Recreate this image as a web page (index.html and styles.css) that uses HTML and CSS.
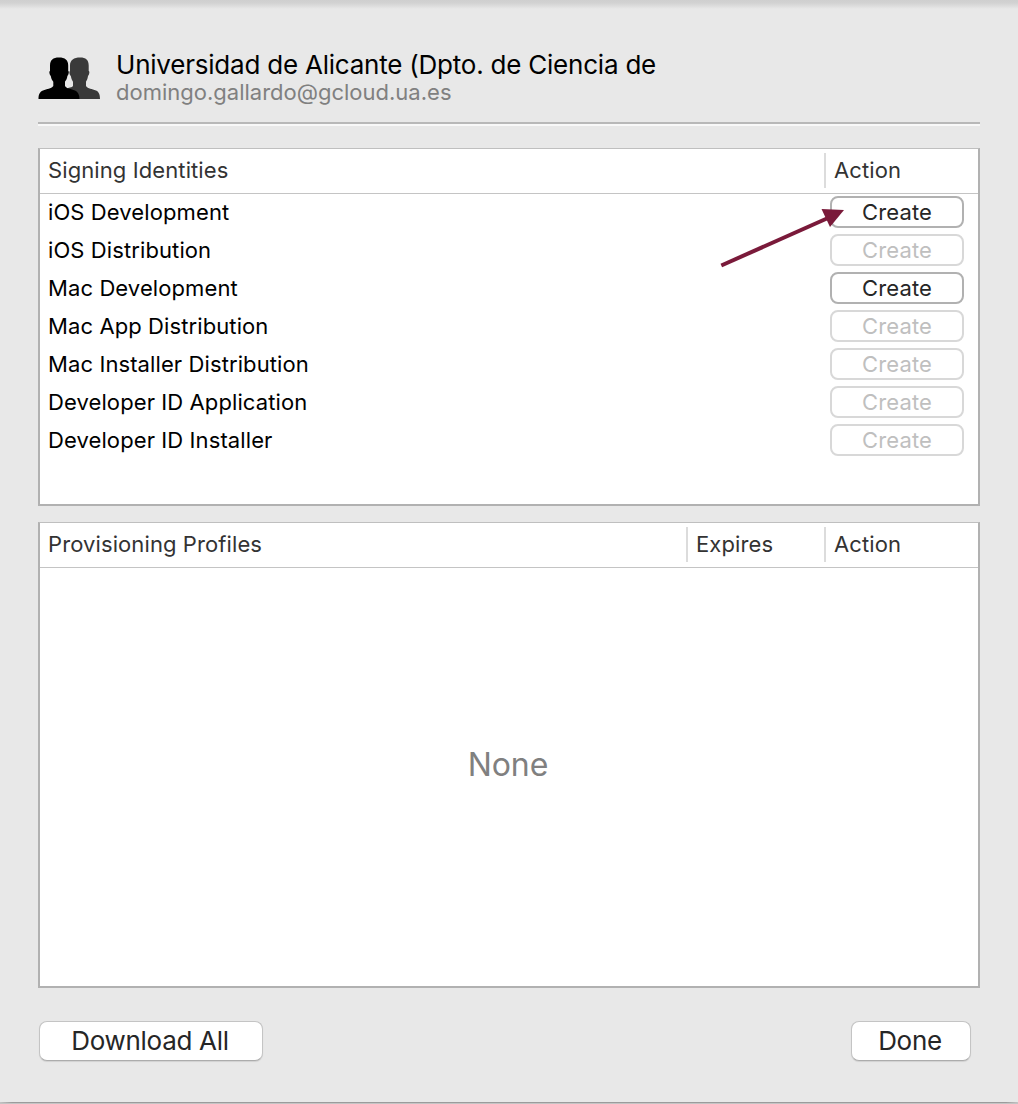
FILE: index.html
```html
<!DOCTYPE html>
<html lang="en">
<head>
<meta charset="utf-8">
<title>Signing Identities</title>
<link rel="stylesheet" href="styles.css">
</head>
<body>
<main class="sheet">
  <header class="account">
    <svg class="team-icon" width="64" height="46" viewBox="0 0 64 46" aria-hidden="true">
      <path class="person-back" d="M42 .5c6 0 8.700 2.500 8.700 8v5.500c1 0 1 3-.7 5-.5 4-2 5-2 6v4c2 3 6 2.800 10 4.500 3 1.500 4 4 4 8.500H30V31c3-.5 4-1 5-2v-4c0-1-1.500-2-2.200-6-1.800-2-1.500-5-.8-5V8.500c0-5.500 4-8 10-8z"/>
      <path class="person-front" d="M21 .5c6 0 9.200 2.500 9.200 8v5.500c1 0 .8 3-.8 5-.5 4-2.400 5-2.400 6v4c2 3 6 2.800 10 4.500 3 1.500 4.500 4 4.500 8.500H.5c0-4.500 1-7 4.500-8.500 4-1.700 8-1.500 10.300-4.500v-4c0-1-2-2-2.500-6-1.600-2-1.800-5-.8-5V8.500c0-5.500 3-8 9-8z"/>
    </svg>
    <div class="account-text">
      <h1 class="account-name"><span>Universidad de Alicante (Dpto. de Ciencia de</span></h1>
      <p class="account-mail"><span>domingo.gallardo@gcloud.ua.es</span></p>
    </div>
  </header>

  <section class="panel identities">
    <div class="panel-head">
      <div class="col-name"><span>Signing Identities</span></div>
      <div class="col-action">Action</div>
    </div>
    <ul class="rows">
      <li class="row"><span>iOS Development</span><button class="create">Create</button></li>
      <li class="row"><span>iOS Distribution</span><button class="create" disabled>Create</button></li>
      <li class="row"><span>Mac Development</span><button class="create">Create</button></li>
      <li class="row"><span>Mac App Distribution</span><button class="create" disabled>Create</button></li>
      <li class="row"><span>Mac Installer Distribution</span><button class="create" disabled>Create</button></li>
      <li class="row"><span>Developer ID Application</span><button class="create" disabled>Create</button></li>
      <li class="row"><span>Developer ID Installer</span><button class="create" disabled>Create</button></li>
    </ul>
    <svg class="arrow" width="126" height="64" viewBox="0 0 126 64" aria-hidden="true">
      <path class="arrow-line" d="M1.300 60.500L108 13"/>
      <path class="arrow-head" d="M101.500 4L124 5 110 22z"/>
    </svg>
  </section>

  <section class="panel profiles">
    <div class="panel-head">
      <div class="col-name"><span>Provisioning Profiles</span></div>
      <div class="col-expires">Expires</div>
      <div class="col-action">Action</div>
    </div>
    <div class="empty"><span>None</span></div>
  </section>

  <footer class="actions">
    <button class="push download">Download All</button>
    <button class="push done">Done</button>
  </footer>
</main>
</body>
</html>
```
FILE: styles.css
```css
* { box-sizing: border-box; }

body {
  margin: 0;
  font-family: Inter, "Liberation Sans", sans-serif;
  font-size: 22px;
  letter-spacing: 0.1px;
  color: #000;
}

h1, p, ul { margin: 0; padding: 0; font-weight: 400; }

button { font: inherit; letter-spacing: inherit; padding: 0; background: #fff; }

.sheet {
  display: flex;
  flex-direction: column;
  width: 1018px;
  height: 1104px;
  padding: 46px 38px 0;
  background:
    linear-gradient(90deg, #c4c4c4, #9b9b9b 12px, #9b9b9b calc(100% - 12px), #c4c4c4) 0 1102px / 100% 1px no-repeat,
    linear-gradient(#c4c4c4, #c4c4c4) 0 1103px / 100% 1px no-repeat,
    linear-gradient(#cfcfcf, #d2d2d2 3px, #e8e8e8 9px) 0 0 / 100% 9px no-repeat,
    #e8e8e8;
}

.account {
  display: flex;
  gap: 14px;
  height: 80px;
  border-bottom: 2px solid #f8f8f8;
  box-shadow: inset 0 -2px #b8b8b8;
}

.team-icon { margin-top: 11px; }
.person-front { fill: #000; }
.person-back { fill: #3a3a3a; }

.account-text { padding-top: 4px; }
.account-name { font-size: 26px; line-height: 30px; letter-spacing: -0.22px; }
.account-mail { line-height: 24px; letter-spacing: 0; color: #808080; }

.panel {
  position: relative;
  display: flex;
  flex-direction: column;
  background: #fff;
  border: 2px solid #b1b1b1;
  border-top: 1px solid #bfbfbf;
}

.identities { height: 358px; margin-top: 22px; }
.profiles { height: 466px; margin-top: 16px; }

.panel-head {
  display: flex;
  align-items: flex-start;
  height: 45px;
  padding-top: 4px;
  border-bottom: 1px solid #c4c4c4;
  color: #333;
  line-height: 35px;
}

.col-name { flex: 1; padding-left: 8px; }
.col-expires, .col-action { padding-left: 8px; border-left: 2px solid #dcdcdc; }
.col-expires { width: 138px; }
.col-action { width: 154px; }

.rows { list-style: none; }

.row {
  display: flex;
  align-items: center;
  justify-content: space-between;
  height: 38px;
  padding: 0 14px 2px 8px;
}

.create {
  width: 134px;
  height: 32px;
  border: 2px solid #b1b1b1;
  border-radius: 8px;
  color: #262626;
  line-height: 28px;
}

.create:disabled { border-color: #d8d8d8; color: #bfbfbf; }

.arrow { position: absolute; left: 680px; top: 56px; }
.arrow-line { fill: none; stroke: #7a1a3a; stroke-width: 4; }
.arrow-head { fill: #7a1a3a; }

.empty {
  flex: 1;
  display: flex;
  align-items: center;
  justify-content: center;
  padding: 0 2px 25px 0;
  font-size: 32px;
  letter-spacing: -0.1px;
  color: #808080;
}

.actions {
  display: flex;
  justify-content: space-between;
  padding: 33px 9px 0 1px;
}

.push {
  height: 40px;
  padding-right: 2px;
  border: 1px solid #c4c4c4;
  border-bottom-color: #acacac;
  border-radius: 8px;
  box-shadow: 0 1px 1px rgba(0, 0, 0, 0.1);
  color: #262626;
  font-size: 26px;
  letter-spacing: -0.3px;
  line-height: 38px;
}

.download { width: 224px; }
.done { width: 120px; }
```
